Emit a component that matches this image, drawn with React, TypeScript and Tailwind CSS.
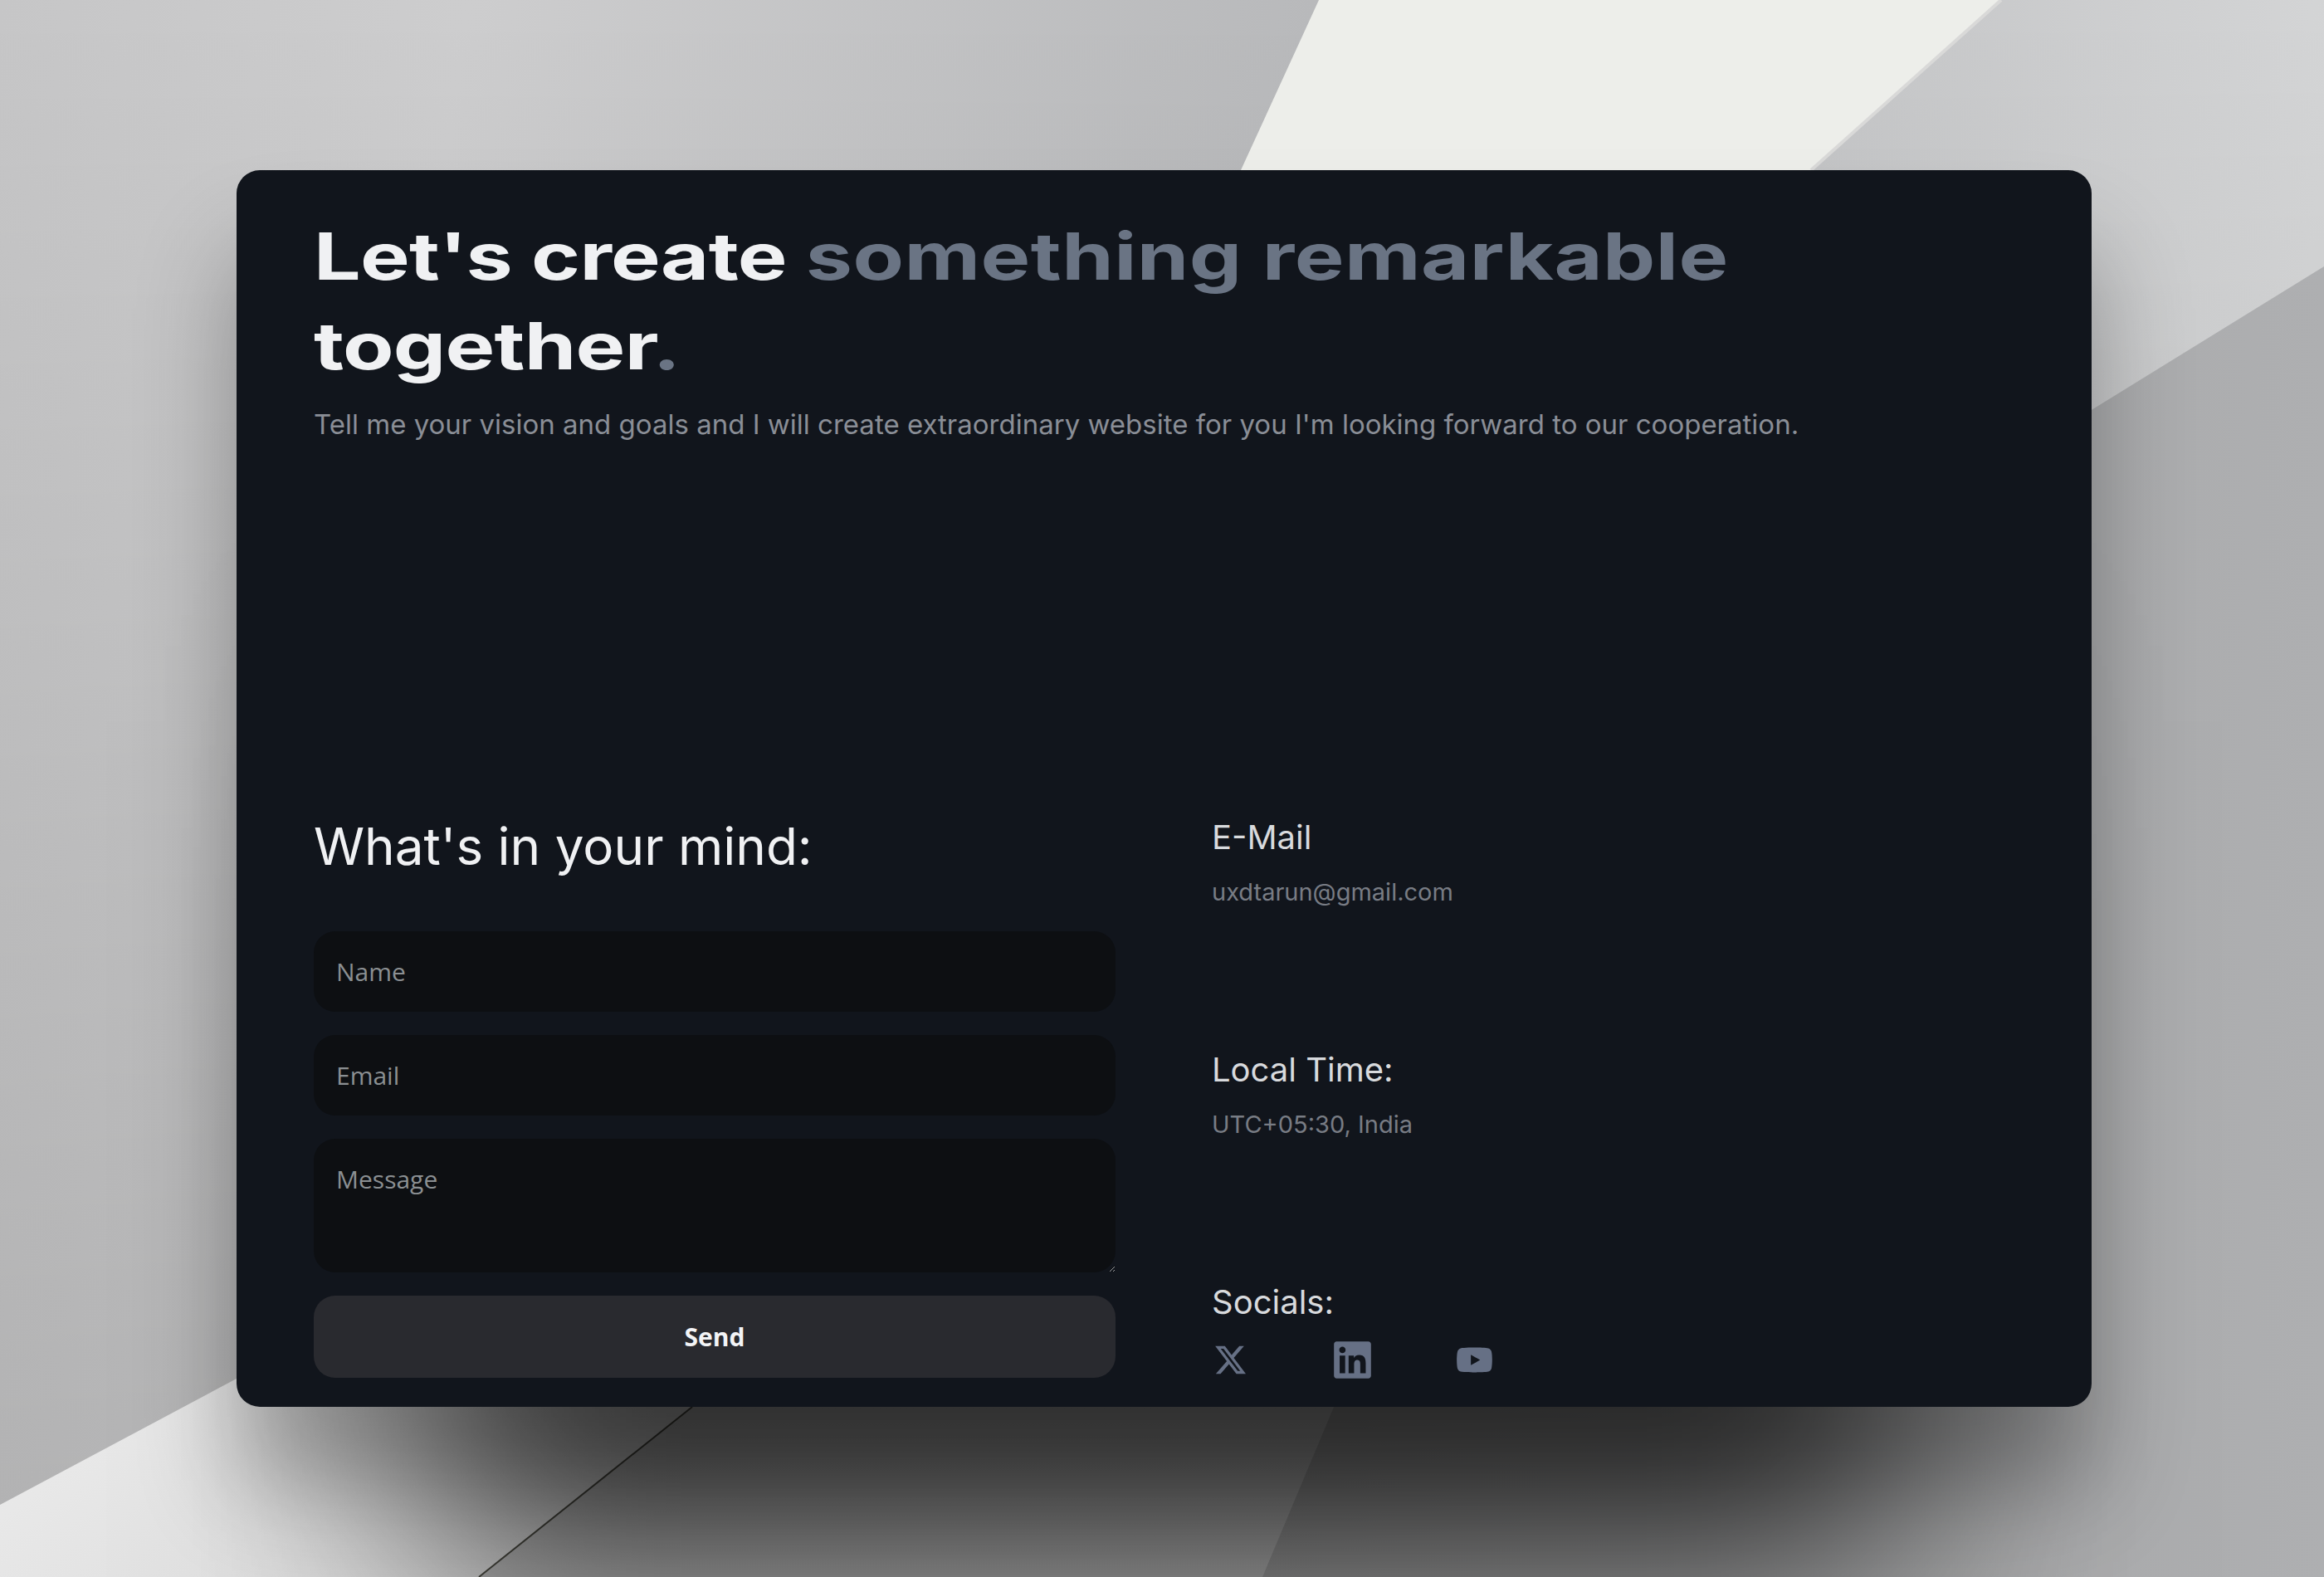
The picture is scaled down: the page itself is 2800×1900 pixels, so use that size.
import { FaLinkedin, FaYoutube } from 'react-icons/fa';
import { FaXTwitter } from 'react-icons/fa6';

function Backdrop() {
  return (
    <svg
      className="absolute inset-0 h-full w-full"
      viewBox="0 0 2800 1900"
      aria-hidden="true"
    >
      <defs>
        <linearGradient id="top-grey" x1="0" y1="0" x2="1" y2="0.1">
          <stop offset="0" stopColor="#c6c6c7" />
          <stop offset="0.2" stopColor="#cdcdce" />
          <stop offset="0.58" stopColor="#b7b8ba" />
          <stop offset="1" stopColor="#d4d5d6" />
        </linearGradient>
        <linearGradient id="top-shade" x1="0" y1="0" x2="0" y2="1">
          <stop offset="0" stopColor="#000" stopOpacity="0" />
          <stop offset="1" stopColor="#000" stopOpacity="0.12" />
        </linearGradient>
        <linearGradient id="low-white" x1="0" y1="0" x2="1" y2="0.4">
          <stop offset="0" stopColor="#ededed" />
          <stop offset="1" stopColor="#d8d8d8" />
        </linearGradient>
        <linearGradient id="low-mid" x1="0" y1="0" x2="0" y2="1">
          <stop offset="0" stopColor="#bcbcbc" />
          <stop offset="1" stopColor="#b8b8b8" />
        </linearGradient>
        <linearGradient id="low-right" x1="0" y1="0" x2="1" y2="0">
          <stop offset="0" stopColor="#a0a0a0" />
          <stop offset="1" stopColor="#aeafb1" />
        </linearGradient>
      </defs>
      <rect width="2800" height="1900" fill="url(#top-grey)" />
      <rect width="2800" height="1900" fill="url(#top-shade)" />
      <polygon
        points="1589,0 2411,0 2182,205 1900,520 1300,500 1495,205"
        fill="#edeeea"
      />
      <line x1="2411" y1="0" x2="2182" y2="205" stroke="#d9d9d8" strokeWidth="4" />
      <polygon points="2800,321 2800,1900 1521,1900 1607,1695 1700,1000" fill="url(#low-right)" />
      <polygon points="834,1695 1607,1695 1521,1900 577,1900" fill="url(#low-mid)" />
      <polygon points="0,1813 285,1661 834,1695 577,1900 0,1900" fill="url(#low-white)" />
      <line x1="834" y1="1695" x2="577" y2="1900" stroke="#4a4a42" strokeWidth="2" />
    </svg>
  );
}

function InfoBlock({ title, text }: { title: string; text: string }) {
  return (
    <div className="h-[280px]">
      <h3 className="text-[40px] leading-[48px] text-[#d8dadd]">{title}</h3>
      <p className="mt-[22px] text-[29px] leading-[40px] text-[#787c84]">{text}</p>
    </div>
  );
}

const fieldClass =
  "w-full rounded-[26px] bg-[#0d0f12] px-[27px] text-[30px] text-[#e5e7eb] outline-none [font-family:'Open_Sans',sans-serif] placeholder:text-[#8b8f92]";

export default function App() {
  return (
    <div className="relative flex h-[1900px] w-[2800px] items-center justify-center overflow-hidden [font-family:Inter,sans-serif]">
      <Backdrop />
      <main className="relative ml-[5px] flex h-[1490px] w-[2235px] flex-col overflow-hidden rounded-[28px] bg-[#11151c] px-[93px] pt-[50px] shadow-[0_440px_300px_-225px_rgba(0,0,0,0.66),0_100px_120px_rgba(0,0,0,0.3)]">
        <h1 className="origin-left scale-x-[1.287] text-[78px] leading-[108px] font-bold tracking-[-0.58px] whitespace-nowrap text-[#f0f1f3]">
          Let's create <span className="tracking-[0.35px] text-[#6a7484]">something remarkable</span>
          <br />
          together<span className="text-[#6a7484]">.</span>
        </h1>
        <p className="mt-[18px] text-[33px] leading-[44px] text-[#8a8e96]">
          Tell me your vision and goals and I will create extraordinary website for you I'm looking forward to our cooperation.
        </p>

        <section className="mt-[454px] flex gap-[116px]">
          <form className="w-[966px]">
            <h2 className="-mt-[3px] text-[62px] leading-[72px] text-[#f0f1f3]">What's in your mind:</h2>
            <div className="mt-[66px] flex flex-col gap-[28px]">
              <input className={`${fieldClass} h-[97px]`} placeholder="Name" />
              <input className={`${fieldClass} h-[97px]`} placeholder="Email" />
              <textarea className={`${fieldClass} block h-[161px] py-[26px]`} placeholder="Message" />
              <button
                type="button"
                className="h-[99px] rounded-[26px] bg-[#292a2f] text-[30px] font-bold text-[#f3f4f6] [font-family:'Open_Sans',sans-serif]"
              >
                Send
              </button>
            </div>
          </form>

          <div className="-mt-[2px] flex flex-col">
            <InfoBlock title="E-Mail" text="uxdtarun@gmail.com" />
            <InfoBlock title="Local Time:" text="UTC+05:30, India" />
            <div>
              <h3 className="text-[40px] leading-[48px] text-[#d8dadd]">Socials:</h3>
              <div className="mt-[20px] grid grid-cols-[147px_147px_147px] items-center text-[#667085]">
                <FaXTwitter className="ml-[2px] size-[41px]" aria-label="X" />
                <FaLinkedin className="h-[51px] w-[45px]" aria-label="LinkedIn" />
                <FaYoutube className="size-[45px]" aria-label="YouTube" />
              </div>
            </div>
          </div>
        </section>
      </main>
    </div>
  );
}
